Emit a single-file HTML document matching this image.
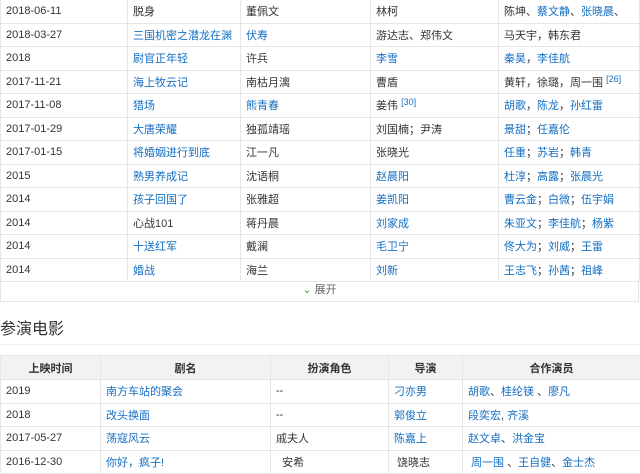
<!DOCTYPE html>
<html><head><meta charset="utf-8"><style>
body{margin:0;width:640px;height:469px;overflow:hidden;background:#fff;font-family:"Liberation Sans","Noto Sans CJK SC",sans-serif;font-size:11px;color:#333}
table{border-collapse:collapse;table-layout:fixed;position:absolute;left:0}
td,th{border:1px solid #e6e6e6;padding:0 0 0 5px;white-space:nowrap;overflow:hidden;text-align:left;font-weight:normal}
a{color:#136ec2;text-decoration:none}
sup{font-size:9px;color:#136ec2;vertical-align:4px}
#t1{top:-1px;width:639px}
#t1 td{height:22.5px}
#exp{position:absolute;left:0;top:280px;width:637px;height:21px;border:1px solid #e6e6e6;border-top:none;text-align:center;line-height:20px;color:#666}
#h{position:absolute;left:0;top:315px;font-size:16px;color:#333}
#hl{position:absolute;left:0;top:344px;width:640px;border-top:1px solid #eee}
#t2{top:355px;width:640px}
#t2 th{background:#f2f2f2;text-align:center;height:23px;font-weight:bold;color:#333;padding:0}
#t2 td{height:22.5px}
</style></head><body>
<table id="t1"><colgroup><col style="width:127px"><col style="width:113px"><col style="width:130px"><col style="width:128px"><col style="width:141px"></colgroup>
<tr><td>2018-06-11</td><td>脱身</td><td>董佩文</td><td>林柯</td><td>陈坤、<a>蔡文静</a>、<a>张晓晨</a>、</td></tr>
<tr><td>2018-03-27</td><td><a>三国机密之潜龙在渊</a></td><td><a>伏寿</a></td><td>游达志、郑伟文</td><td>马天宇，韩东君</td></tr>
<tr><td>2018</td><td><a>尉官正年轻</a></td><td>许兵</td><td><a>李雪</a></td><td><a>秦昊</a>，<a>李佳航</a></td></tr>
<tr><td>2017-11-21</td><td><a>海上牧云记</a></td><td>南枯月漓</td><td>曹盾</td><td>黄轩，徐璐，周一围 <sup>[26]</sup></td></tr>
<tr><td>2017-11-08</td><td><a>猎场</a></td><td><a>熊青春</a></td><td>姜伟 <sup>[30]</sup></td><td><a>胡歌</a>，<a>陈龙</a>，<a>孙红雷</a></td></tr>
<tr><td>2017-01-29</td><td><a>大唐荣耀</a></td><td>独孤靖瑶</td><td>刘国楠；尹涛</td><td><a>景甜</a>；<a>任嘉伦</a></td></tr>
<tr><td>2017-01-15</td><td><a>将婚姻进行到底</a></td><td>江一凡</td><td>张晓光</td><td><a>任重</a>；<a>苏岩</a>；<a>韩青</a></td></tr>
<tr><td>2015</td><td><a>熟男养成记</a></td><td>沈语桐</td><td><a>赵晨阳</a></td><td><a>杜淳</a>；<a>高露</a>；<a>张晨光</a></td></tr>
<tr><td>2014</td><td><a>孩子回国了</a></td><td>张雅超</td><td><a>姜凯阳</a></td><td><a>曹云金</a>；<a>白微</a>；<a>伍宇娟</a></td></tr>
<tr><td>2014</td><td>心战101</td><td>蒋丹晨</td><td><a>刘家成</a></td><td><a>朱亚文</a>；<a>李佳航</a>；<a>杨紫</a></td></tr>
<tr><td>2014</td><td><a>十送红军</a></td><td>戴澜</td><td><a>毛卫宁</a></td><td><a>佟大为</a>；<a>刘威</a>；<a>王雷</a></td></tr>
<tr><td>2014</td><td><a>婚战</a></td><td>海兰</td><td><a>刘新</a></td><td><a>王志飞</a>；<a>孙茜</a>；<a>祖峰</a></td></tr>
</table>
<div id="exp"><span style="color:#4a9a3a">&#8964;</span> 展开</div>
<div id="h">参演电影</div>
<div id="hl"></div>
<table id="t2"><colgroup><col style="width:100px"><col style="width:170px"><col style="width:118px"><col style="width:74px"><col style="width:178px"></colgroup>
<tr><th>上映时间</th><th>剧名</th><th>扮演角色</th><th>导演</th><th>合作演员</th></tr>
<tr><td>2019</td><td><a>南方车站的聚会</a></td><td>--</td><td><a>刁亦男</a></td><td><a>胡歌</a>、<a>桂纶镁</a> 、<a>廖凡</a></td></tr>
<tr><td>2018</td><td><a>改头换面</a></td><td>--</td><td><a>郭俊立</a></td><td><a>段奕宏</a>, <a>齐溪</a></td></tr>
<tr><td>2017-05-27</td><td><a>荡寇风云</a></td><td>戚夫人</td><td><a>陈嘉上</a></td><td><a>赵文卓</a>、<a>洪金宝</a></td></tr>
<tr><td>2016-12-30</td><td><a>你好，疯子!</a></td><td>&nbsp;&nbsp;安希</td><td>&nbsp;饶晓志</td><td>&nbsp;<a>周一围</a> 、<a>王自健</a>、<a>金士杰</a></td></tr>
</table>
</body></html>
